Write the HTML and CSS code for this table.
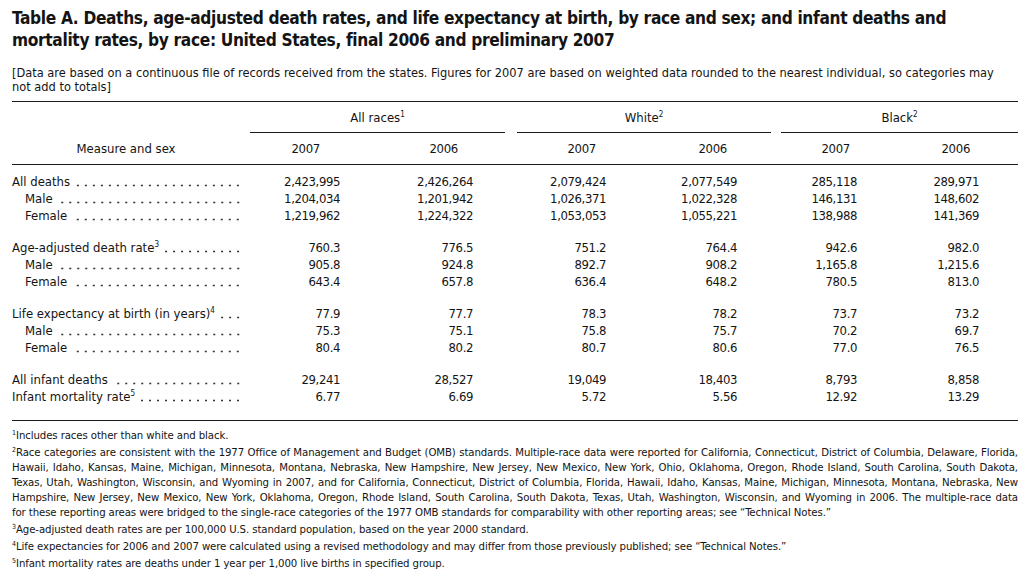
FILE: index.html
```html
<!DOCTYPE html>
<html lang="en">
<head>
<meta charset="utf-8">
<title>Table A</title>
<link rel="stylesheet" href="styles.css">
</head>
<body>
<div class="page">
  <h1 class="title">Table A. Deaths, age-adjusted death rates, and life expectancy at birth, by race and sex; and infant deaths and<br>mortality rates, by race: United States, final 2006 and preliminary 2007</h1>
  <p class="note">[Data are based on a continuous file of records received from the states. Figures for 2007 are based on weighted data rounded to the nearest individual, so categories may<br>not add to totals]</p>

  <table class="data">
    <colgroup>
      <col class="c-lab"><col class="c-1"><col class="c-2"><col class="c-gap1"><col class="c-3"><col class="c-4"><col class="c-gap2"><col class="c-5"><col class="c-6">
    </colgroup>
    <thead>
      <tr class="grp">
        <th class="lab"></th>
        <th colspan="2" class="g">All races<sup>1</sup></th>
        <th class="gap"></th>
        <th colspan="2" class="g">White<sup>2</sup></th>
        <th class="gap"></th>
        <th colspan="2" class="g">Black<sup>2</sup></th>
      </tr>
      <tr class="yr">
        <th class="lab">Measure and sex</th>
        <th>2007</th><th>2006</th><th class="gap"></th>
        <th>2007</th><th>2006</th><th class="gap"></th>
        <th>2007</th><th>2006</th>
      </tr>
    </thead>
    <tbody>
      <tr class="top">
        <td class="lab"><span class="t">All deaths</span><span class="dots"></span></td>
        <td>2,423,995</td><td>2,426,264</td><td></td><td>2,079,424</td><td>2,077,549</td><td></td><td>285,118</td><td>289,971</td>
      </tr>
      <tr>
        <td class="lab sub"><span class="t">Male</span><span class="dots"></span></td>
        <td>1,204,034</td><td>1,201,942</td><td></td><td>1,026,371</td><td>1,022,328</td><td></td><td>146,131</td><td>148,602</td>
      </tr>
      <tr>
        <td class="lab sub"><span class="t">Female</span><span class="dots"></span></td>
        <td>1,219,962</td><td>1,224,322</td><td></td><td>1,053,053</td><td>1,055,221</td><td></td><td>138,988</td><td>141,369</td>
      </tr>

      <tr class="gs">
        <td class="lab"><span class="t">Age-adjusted death rate<sup>3</sup></span><span class="dots"></span></td>
        <td>760.3</td><td>776.5</td><td></td><td>751.2</td><td>764.4</td><td></td><td>942.6</td><td>982.0</td>
      </tr>
      <tr>
        <td class="lab sub"><span class="t">Male</span><span class="dots"></span></td>
        <td>905.8</td><td>924.8</td><td></td><td>892.7</td><td>908.2</td><td></td><td>1,165.8</td><td>1,215.6</td>
      </tr>
      <tr>
        <td class="lab sub"><span class="t">Female</span><span class="dots"></span></td>
        <td>643.4</td><td>657.8</td><td></td><td>636.4</td><td>648.2</td><td></td><td>780.5</td><td>813.0</td>
      </tr>

      <tr class="gs">
        <td class="lab"><span class="t">Life expectancy at birth (in years)<sup>4</sup></span><span class="dots"></span></td>
        <td>77.9</td><td>77.7</td><td></td><td>78.3</td><td>78.2</td><td></td><td>73.7</td><td>73.2</td>
      </tr>
      <tr>
        <td class="lab sub"><span class="t">Male</span><span class="dots"></span></td>
        <td>75.3</td><td>75.1</td><td></td><td>75.8</td><td>75.7</td><td></td><td>70.2</td><td>69.7</td>
      </tr>
      <tr>
        <td class="lab sub"><span class="t">Female</span><span class="dots"></span></td>
        <td>80.4</td><td>80.2</td><td></td><td>80.7</td><td>80.6</td><td></td><td>77.0</td><td>76.5</td>
      </tr>

      <tr class="gs">
        <td class="lab"><span class="t">All infant deaths</span><span class="dots"></span></td>
        <td>29,241</td><td>28,527</td><td></td><td>19,049</td><td>18,403</td><td></td><td>8,793</td><td>8,858</td>
      </tr>
      <tr class="last">
        <td class="lab"><span class="t">Infant mortality rate<sup>5</sup></span><span class="dots"></span></td>
        <td>6.77</td><td>6.69</td><td></td><td>5.72</td><td>5.56</td><td></td><td>12.92</td><td>13.29</td>
      </tr>
    </tbody>
  </table>

  <div class="foot">
    <p><sup>1</sup>Includes races other than white and black.</p>
    <p>
      <span class="ln"><sup>2</sup>Race categories are consistent with the 1977 Office of Management and Budget (OMB) standards. Multiple-race data were reported for California, Connecticut, District of Columbia, Delaware, Florida,</span>
      <span class="ln">Hawaii, Idaho, Kansas, Maine, Michigan, Minnesota, Montana, Nebraska, New Hampshire, New Jersey, New Mexico, New York, Ohio, Oklahoma, Oregon, Rhode Island, South Carolina, South Dakota,</span>
      <span class="ln">Texas, Utah, Washington, Wisconsin, and Wyoming in 2007, and for California, Connecticut, District of Columbia, Florida, Hawaii, Idaho, Kansas, Maine, Michigan, Minnesota, Montana, Nebraska, New</span>
      <span class="ln">Hampshire, New Jersey, New Mexico, New York, Oklahoma, Oregon, Rhode Island, South Carolina, South Dakota, Texas, Utah, Washington, Wisconsin, and Wyoming in 2006. The multiple-race data</span>
      <span class="ln end">for these reporting areas were bridged to the single-race categories of the 1977 OMB standards for comparability with other reporting areas; see “Technical Notes.”</span>
    </p>
    <p><sup>3</sup>Age-adjusted death rates are per 100,000 U.S. standard population, based on the year 2000 standard.</p>
    <p><sup>4</sup>Life expectancies for 2006 and 2007 were calculated using a revised methodology and may differ from those previously published; see “Technical Notes.”</p>
    <p><sup>5</sup>Infant mortality rates are deaths under 1 year per 1,000 live births in specified group.</p>
  </div>
</div>
</body>
</html>
```

FILE: styles.css
```css
html, body {
  margin: 0;
  padding: 0;
  background: #ffffff;
}

body {
  color: #141414;
  font-family: "DejaVu Sans Condensed", "DejaVu Sans", sans-serif;
}

.page {
  width: 1006px;
  padding: 7px 0 0 12px;
}

.title {
  margin: 0;
  font-size: 17.2px;
  line-height: 22px;
  font-weight: bold;
  letter-spacing: -0.35px;
  white-space: nowrap;
}

.note {
  margin: 15px 0 0 0;
  font-size: 12.7px;
  line-height: 14px;
  white-space: nowrap;
}

.data {
  margin-top: 7px;
  width: 1006px;
  table-layout: fixed;
  border-collapse: separate;
  border-spacing: 0;
  border-top: 1px solid #1a1a1a;
  border-bottom: 1px solid #1a1a1a;
  font-size: 13px;
  line-height: 17px;
}

.c-lab { width: 238px; }
.c-1 { width: 128px; }
.c-2 { width: 127px; }
.c-gap1 { width: 12px; }
.c-3 { width: 127px; }
.c-4 { width: 127px; }
.c-gap2 { width: 10px; }
.c-5 { width: 119px; }
.c-6 { width: 118px; }

.data th {
  font-weight: normal;
  padding: 0;
}

.grp th {
  padding: 7px 0 6px 0;
  text-align: center;
}

.grp th.g {
  border-bottom: 1px solid #1a1a1a;
}

.yr th {
  padding: 7px 0 7px 0;
  border-bottom: 1px solid #1a1a1a;
  text-align: right;
  letter-spacing: -0.3px;
}

.yr th.lab {
  text-align: center;
  padding-right: 10px;
  letter-spacing: 0;
}

.yr th:nth-child(2) { padding-right: 58px; }
.yr th:nth-child(3) { padding-right: 47px; }
.yr th:nth-child(5) { padding-right: 48px; }
.yr th:nth-child(6) { padding-right: 44px; }
.yr th:nth-child(8) { padding-right: 50px; }
.yr th:nth-child(9) { padding-right: 48px; }

.data td {
  padding: 0;
  text-align: right;
  white-space: nowrap;
  letter-spacing: -0.4px;
}

.data tr.top td { padding-top: 8px; }
.data tr.gs td { padding-top: 15px; }
.data tr.last td { padding-bottom: 15px; }

.data td:nth-child(2) { padding-right: 38px; }
.data td:nth-child(3) { padding-right: 32px; }
.data td:nth-child(5) { padding-right: 38px; }
.data td:nth-child(6) { padding-right: 34px; }
.data td:nth-child(8) { padding-right: 43px; }
.data td:nth-child(9) { padding-right: 39px; }

.data td.lab {
  display: flex;
  align-items: stretch;
  text-align: left;
  padding-right: 8px;
  letter-spacing: 0;
}

.lab .t {
  white-space: nowrap;
}

.data td.sub {
  padding-left: 13px;
}

.dots {
  flex: 1;
  margin-left: 4px;
  background-image: radial-gradient(circle at center, #333 0.75px, transparent 1.25px);
  background-size: 8px 3px;
  background-repeat: repeat-x;
  background-position: right 0 bottom 3px;
}

sup {
  font-size: 8px;
  line-height: 0;
  vertical-align: 5px;
}

.foot {
  padding-top: 7px;
  font-size: 11.3px;
  line-height: 15px;
  letter-spacing: -0.1px;
}

.foot p {
  margin: 0 0 2px 0;
}

.foot .ln {
  display: block;
  white-space: nowrap;
  text-align: justify;
  text-align-last: justify;
}

.foot .ln.end {
  text-align-last: left;
}

.foot sup {
  font-size: 7px;
  vertical-align: 4px;
  letter-spacing: 0;
}
```
